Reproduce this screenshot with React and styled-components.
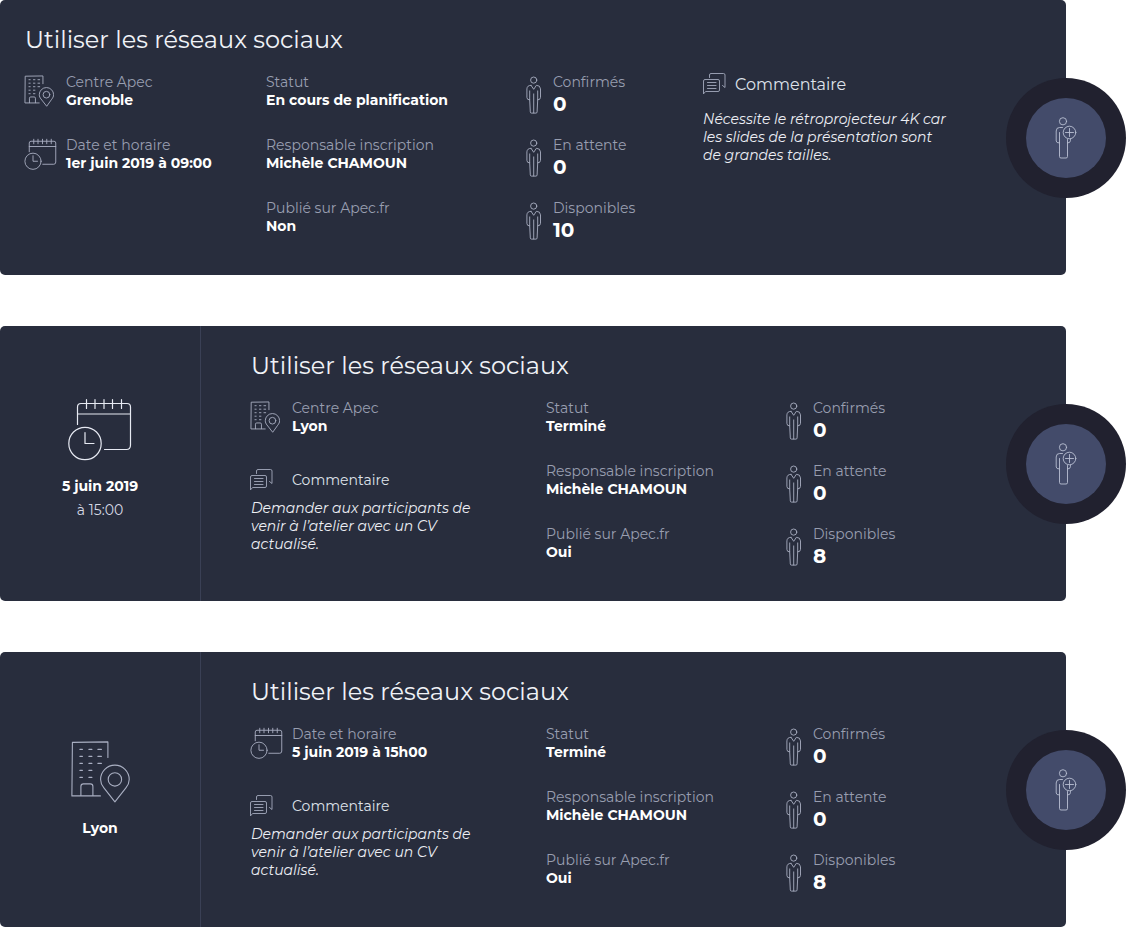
import React from "react";
import styled, { createGlobalStyle } from "styled-components";

const GlobalStyle = createGlobalStyle`
    * {
        box-sizing: border-box;
    }

    body {
        margin: 0;
        background: #fff;
        font-family: Montserrat, Inter, "Open Sans", sans-serif;
        color: #fff;
    }

    h2, p, dl, dt, dd {
        margin: 0;
        font-weight: inherit;
    }
`;

const Page = styled.main`
    width: 1126px;
    height: 927px;
    overflow: hidden;
`;

const Card = styled.article`
    position: relative;
    display: flex;
    width: 1066px;
    height: 275px;
    margin-bottom: ${({ $gap }) => $gap || 0}px;
    border-radius: 5px;
    background: #282d3d;
`;

const Side = styled.aside`
    width: 201px;
    padding-top: ${({ $top }) => $top}px;
    border-right: 1px solid #3a4055;
    display: flex;
    flex-direction: column;
    align-items: center;
    font-size: 14px;
    line-height: 24px;

    svg {
        margin-bottom: ${({ $gap }) => $gap}px;
    }
`;

const SideStrong = styled.strong`
    font-weight: 700;
`;

const SideText = styled.span`
    font-weight: 400;
    color: #d5d9e4;
`;

const Content = styled.div`
    flex: 1;
    padding: 25px 0 0 ${({ $left }) => $left}px;
`;

const Title = styled.h2`
    height: 30px;
    margin-bottom: 18px;
    font-size: 24px;
    line-height: 30px;
    font-weight: 400;
    color: #f0f2f7;
    white-space: nowrap;
`;

const Columns = styled.div`
    display: grid;
    grid-template-columns: ${({ $cols }) => $cols};
`;

const Column = styled.dl`
    display: grid;
    grid-auto-rows: 63px;
    align-content: start;
`;

const Item = styled.div`
    display: grid;
    grid-template-columns: ${({ $icon }) => ($icon ? `${$icon}px 1fr` : "1fr")};
    align-items: start;
    white-space: nowrap;
`;

const ItemIcon = styled.span`
    display: flex;
    margin: ${({ $top }) => $top}px 0 0 -1px;
`;

const Label = styled.dt`
    font-size: 14px;
    line-height: 18px;
    font-weight: 400;
    color: #989eb0;
`;

const Value = styled.dd`
    font-size: 14px;
    line-height: 18px;
    font-weight: 700;
`;

const Count = styled.dd`
    font-size: 20px;
    line-height: 26px;
    font-weight: 700;
`;

const CommentBlock = styled.div`
    margin-top: ${({ $top }) => $top || 0}px;
`;

const CommentHead = styled.div`
    display: grid;
    grid-template-columns: ${({ $large }) => ($large ? 32 : 41)}px 1fr;
    height: ${({ $large }) => ($large ? 37 : 30)}px;
    font-size: ${({ $large }) => ($large ? 16 : 14)}px;
    line-height: 23px;
    font-weight: 400;
    color: #dfe2ea;

    svg {
        margin-left: ${({ $large }) => ($large ? 0 : -1)}px;
    }
`;

const CommentBody = styled.p`
    font-size: 14px;
    line-height: 18px;
    font-style: italic;
    font-weight: 400;
    color: #eceef4;
    white-space: nowrap;
`;

const CommentLine = styled.span`
    display: block;
`;

// the ring straddles the right edge of the card
const Ring = styled.div`
    position: absolute;
    top: 78px;
    right: -60px;
    width: 120px;
    height: 120px;
    padding: 20px;
    border-radius: 50%;
    background: #21212f;
`;

const AddButton = styled.button`
    display: flex;
    align-items: center;
    justify-content: center;
    width: 80px;
    height: 80px;
    padding: 0;
    border: 0;
    border-radius: 50%;
    background: #434b6a;
`;

const Icon = styled.svg`
    display: block;
    flex: none;
    fill: none;
    stroke: ${({ $color }) => $color || "#a3a9bc"};
    stroke-width: ${({ $stroke }) => $stroke || 1};
    stroke-linecap: round;
    stroke-linejoin: round;

    * {
        vector-effect: non-scaling-stroke;
    }
`;

const BuildingIcon = ({ scale = 0.5 }) => (
    <Icon width={60 * scale} height={64 * scale} viewBox="-0.4 -0.4 60 64" $stroke={scale === 1 ? 1.1 : 0.9} $color="#a9afc2">
        <path d="M30 55.500H1.500L2 2L37.500 1.500V17" />
        <path d="M10.500 55V46Q10.500 43.500 13 43.500H20Q22.500 43.500 22.500 46V55" />
        <path d="M9.500 9h2.500M18.500 9h3M27.500 9h3.500M9.500 16h2.500M18.500 16h3M27.500 16h3.500M9.500 23h2.500M18.500 23h3M27.500 23h3.500M9.500 30h2.500M18.500 30h3M9.500 37h2.500M18.500 37h3" />
        <path d="M44.500 61.500L33.500 47.500C31.500 45 30.200 42.500 30.200 39A14.300 14.300 0 0 1 58.800 39C58.800 42.500 57.500 45 55.500 47.500Z" />
        <circle cx="44.500" cy="39" r="6.700" />
    </Icon>
);

const CalendarIcon = ({ scale = 0.5 }) => (
    <Icon width={66 * scale} height={66 * scale} viewBox="0 0 66 66" $stroke={scale === 1 ? 1.2 : 0.9} $color={scale === 1 ? "#e6e9f2" : "#a9afc2"}>
        <path d="M10.500 27.500V10Q10.500 6.500 14 6.500H60Q63.500 6.500 63.500 10V48Q63.500 52.500 59.500 52.500H37.500M10.500 17H63.500" />
        <path d="M19.500 2.500v9M28 2.500v9M37 2.500v9M45.500 2.500v9M54.500 2.500v9" />
        <circle cx="18" cy="46.500" r="16.200" />
        <path d="M18 35.500V46.500H27" />
    </Icon>
);

const CommentIcon = () => (
    <Icon width="24" height="22" viewBox="0 0 24 22" $color="#a3a9bc" $stroke={0.9}>
        <path d="M6.500 4.500V2Q6.500 .500 8 .500H20.500Q22 .500 22 2V14.500L19.500 12.500" />
        <path d="M.500 20.500V8Q.500 6.500 2 6.500H15Q16.500 6.500 16.500 8V17Q16.500 18.500 15 18.500H3Z" />
        <path d="M4.500 9.500h8.500M4.500 12.500h8.500M4.500 15.500h8.500" />
    </Icon>
);

const PersonIcon = () => (
    <Icon width="16" height="38" viewBox="0 -0.4 16 38" $color="#a9afc2" $stroke={0.9}>
        <circle cx="7.700" cy="3.700" r="3.100" />
        <path d="M5 8.900Q1.100 8.900 .900 12.500V21Q.900 23.500 3.700 23.500V14.500M3.700 23.500L4.300 35.500Q4.300 36.700 5.500 36.700H9.900Q11.100 36.700 11.100 35.500L11.700 23.500V14.500M11.700 23.500Q14.500 23.500 14.500 21V12.500Q14.300 8.900 10.400 8.900L7.700 12.900L5 8.900M7.700 17.500V36.500" />
    </Icon>
);

const AddPersonIcon = () => (
    <Icon width="22" height="42" viewBox="0 0 22 42" $color="#b9bfd2" $stroke={0.9}>
        <circle cx="8" cy="4.300" r="3.600" />
        <path d="M4.500 15.500V39.500Q4.500 41 6 41H11Q12.500 41 12.500 39.500V22.500M4.500 26Q1.200 26 1.200 24V14Q1.200 10.500 4.500 10.500H7.500M12.500 26Q15.500 26 15.500 23.500V22.500" />
        <circle cx="14.500" cy="15.500" r="6.300" />
        <path d="M14.500 11.500v8M10.500 15.500h8" />
    </Icon>
);

const Info = ({ label, value, icon, iconTop }) => (
    <Item $icon={icon ? 41 : 0}>
        {icon && <ItemIcon $top={iconTop}>{icon}</ItemIcon>}
        <div>
            <Label>{label}</Label>
            <Value>{value}</Value>
        </div>
    </Item>
);

const Centre = ({ value }) => (
    <Info label="Centre Apec" value={value} icon={<BuildingIcon />} iconTop={2} />
);

const Schedule = ({ value }) => (
    <Info label="Date et horaire" value={value} icon={<CalendarIcon />} iconTop={1.5} />
);

const Status = ({ status, published }) => (
    <Column>
        <Info label="Statut" value={status} />
        <Info label="Responsable inscription" value="Michèle CHAMOUN" />
        <Info label="Publié sur Apec.fr" value={published} />
    </Column>
);

const Seats = ({ confirmed, waiting, available }) => (
    <Column>
        {[["Confirmés", confirmed], ["En attente", waiting], ["Disponibles", available]].map(([label, count]) => (
            <Item key={label} $icon={26}>
                <ItemIcon $top={3}><PersonIcon /></ItemIcon>
                <div>
                    <Label>{label}</Label>
                    <Count>{count}</Count>
                </div>
            </Item>
        ))}
    </Column>
);

const Comment = ({ lines, large, top }) => (
    <CommentBlock $top={top}>
        <CommentHead $large={large}>
            <CommentIcon />
            <span>Commentaire</span>
        </CommentHead>
        <CommentBody>
            {lines.map((line) => <CommentLine key={line}>{line}</CommentLine>)}
        </CommentBody>
    </CommentBlock>
);

const AddParticipant = () => (
    <Ring>
        <AddButton aria-label="Ajouter un participant">
            <AddPersonIcon />
        </AddButton>
    </Ring>
);

const TITLE = "Utiliser les réseaux sociaux";

const lyonComment = [
    "Demander aux participants de",
    "venir à l’atelier avec un CV",
    "actualisé.",
];

const grenobleComment = [
    "Nécessite le rétroprojecteur 4K car",
    "les slides de la présentation sont",
    "de grandes tailles.",
];

const LyonDetails = ({ children }) => (
    <Content $left={50}>
        <Title>{TITLE}</Title>
        <Columns $cols="295px 241px 1fr">
            <div>
                <Column>{children}</Column>
                <Comment top={7} lines={lyonComment} />
            </div>
            <Status status="Terminé" published="Oui" />
            <Seats confirmed="0" waiting="0" available="8" />
        </Columns>
    </Content>
);

const App = () => {
    return (
        <Page>
            <GlobalStyle />
            <Card $gap={50.5}>
                <Content $left={25}>
                    <Title>{TITLE}</Title>
                    <Columns $cols="241px 261px 176px 1fr">
                        <Column>
                            <Centre value="Grenoble" />
                            <Schedule value="1er juin 2019 à 09:00" />
                        </Column>
                        <Status status="En cours de planification" published="Non" />
                        <Seats confirmed="0" waiting="0" available="10" />
                        <Comment large lines={grenobleComment} />
                    </Columns>
                </Content>
                <AddParticipant />
            </Card>

            <Card $gap={51.5}>
                <Side $top={71} $gap={11}>
                    <CalendarIcon scale={1} />
                    <SideStrong>5 juin 2019</SideStrong>
                    <SideText>à 15:00</SideText>
                </Side>
                <LyonDetails>
                    <Centre value="Lyon" />
                </LyonDetails>
                <AddParticipant />
            </Card>

            <Card>
                <Side $top={88} $gap={12}>
                    <BuildingIcon scale={1} />
                    <SideStrong>Lyon</SideStrong>
                </Side>
                <LyonDetails>
                    <Schedule value="5 juin 2019 à 15h00" />
                </LyonDetails>
                <AddParticipant />
            </Card>
        </Page>
    );
};

export default App;
